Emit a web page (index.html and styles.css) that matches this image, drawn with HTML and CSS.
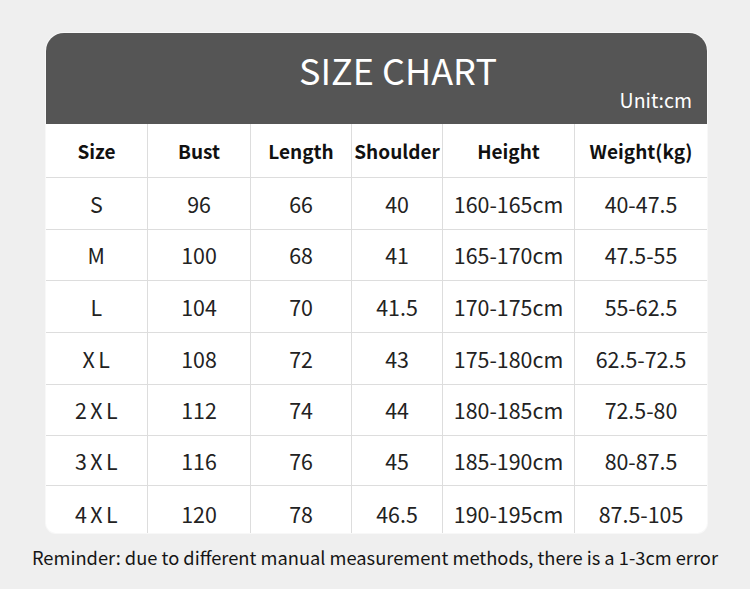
FILE: index.html
```html
<!DOCTYPE html>
<html>
<head>
<meta charset="utf-8">
<link rel="stylesheet" href="styles.css">
</head>
<body>
<div class="page">
  <div class="card">
    <div class="banner">
      <div class="title">SIZE CHART</div>
      <div class="unit">Unit:cm</div>
    </div>
    <div class="grid">
      <div class="cell head">Size</div><div class="cell head">Bust</div><div class="cell head">Length</div><div class="cell head">Shoulder</div><div class="cell head">Height</div><div class="cell head">Weight(kg)</div>
      <div class="cell sz">S</div><div class="cell">96</div><div class="cell">66</div><div class="cell">40</div><div class="cell">160-165cm</div><div class="cell">40-47.5</div>
      <div class="cell sz">M</div><div class="cell">100</div><div class="cell">68</div><div class="cell">41</div><div class="cell">165-170cm</div><div class="cell">47.5-55</div>
      <div class="cell sz">L</div><div class="cell">104</div><div class="cell">70</div><div class="cell">41.5</div><div class="cell">170-175cm</div><div class="cell">55-62.5</div>
      <div class="cell sz">XL</div><div class="cell">108</div><div class="cell">72</div><div class="cell">43</div><div class="cell">175-180cm</div><div class="cell">62.5-72.5</div>
      <div class="cell sz">2XL</div><div class="cell">112</div><div class="cell">74</div><div class="cell">44</div><div class="cell">180-185cm</div><div class="cell">72.5-80</div>
      <div class="cell sz">3XL</div><div class="cell">116</div><div class="cell">76</div><div class="cell">45</div><div class="cell">185-190cm</div><div class="cell">80-87.5</div>
      <div class="cell sz">4XL</div><div class="cell">120</div><div class="cell">78</div><div class="cell">46.5</div><div class="cell">190-195cm</div><div class="cell">87.5-105</div>
    </div>
  </div>
  <div class="note">Reminder: due to different manual measurement methods, there is a 1-3cm error</div>
</div>
</body>
</html>
```
FILE: styles.css
```css
html, body {
  margin: 0;
  padding: 0;
  background: #efefef;
}
.page {
  width: 750px;
  height: 589px;
  padding-top: 33px;
  box-sizing: border-box;
  font-family: "Noto Sans CJK SC", "Noto Sans", sans-serif;
}
.card {
  margin-left: 46px;
  width: 661px;
  background: #ffffff;
  border-radius: 18px 18px 10px 10px;
  overflow: hidden;
  box-shadow: 0 0 0 1px #f8f8f8;
}
.banner {
  height: 91px;
  background: #555555;
  position: relative;
  display: flex;
  justify-content: center;
}
.title {
  color: #ffffff;
  font-size: 36px;
  line-height: 1;
  padding-top: 18px;
  padding-left: 43px;
}
.unit {
  position: absolute;
  right: 15px;
  bottom: 15px;
  color: #ffffff;
  font-size: 19.5px;
  line-height: 1;
}
.grid {
  display: grid;
  grid-template-columns: 102px 103px 101px 91px 132px 132px;
  grid-template-rows: 54px 52px 51px 52px 52px 51px 50px 47px;
}
.cell {
  display: flex;
  align-items: center;
  justify-content: center;
  font-size: 21.4px;
  color: #222222;
  border-right: 1px solid #dddddd;
  border-bottom: 1px solid #dddddd;
  box-sizing: border-box;
  line-height: 1;
}
.cell:nth-child(6n) {
  border-right: none;
}
.cell:nth-last-child(-n+6) {
  border-bottom: none;
  padding-top: 8px;
}
.head {
  font-weight: bold;
  font-size: 19px;
  color: #111111;
}
.sz {
  letter-spacing: 3.5px;
  padding-left: 3px;
}
.note {
  margin-top: 12px;
  text-align: center;
  font-size: 18.3px;
  color: #151515;
  line-height: 24px;
}
```
